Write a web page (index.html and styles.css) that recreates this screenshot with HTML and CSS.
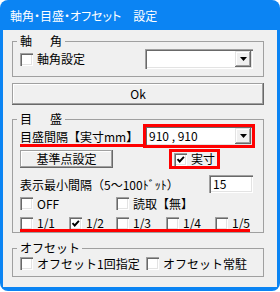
FILE: index.html
```html
<!DOCTYPE html>
<html>
<head>
<meta charset="utf-8">
<link rel="stylesheet" href="styles.css">
</head>
<body>
<div class="win">
  <div class="title">軸角・目盛・オフセット　設定</div>
  <div class="client">
    <fieldset class="grp g1">
      <legend>軸　角</legend>
      <div class="gb">
        <div class="row r-axis">
          <label class="chk"><span class="box"></span>軸角設定</label>
          <div class="combo c-axis"><span class="cval"></span><span class="dd"><svg width="7" height="4" viewBox="0 0 7 4"><path d="M0 0h7L3.5 4z" fill="#000"/></svg></span></div>
        </div>
      </div>
    </fieldset>
    <div class="btn ok">Ok</div>
    <fieldset class="grp g2">
      <legend>目　盛</legend>
      <div class="gb">
        <div class="row r-int">
          <span class="lbl under">目盛間隔【実寸mm】</span>
          <div class="combo c-int redbox"><span class="cval num">910 , 910</span><span class="dd"><svg width="7" height="4" viewBox="0 0 7 4"><path d="M0 0h7L3.5 4z" fill="#000"/></svg></span></div>
        </div>
        <div class="row r-base">
          <div class="btn base">基準点設定</div>
          <label class="chk jissun redbox"><span class="box"><svg width="9" height="9" viewBox="0 0 9 9"><path d="M1.5 4.2l2.2 2.3 4.2-4.6" fill="none" stroke="#000" stroke-width="1.9"/></svg></span>実寸</label>
        </div>
        <div class="row r-min">
          <span class="lbl">表示最小間隔（5～100ﾄﾞｯﾄ）</span>
          <div class="edit num">15</div>
        </div>
        <div class="row r-off">
          <label class="chk w-off"><span class="box"></span>OFF</label>
          <label class="chk"><span class="box"></span>読取【無】</label>
        </div>
        <div class="row r-frac underline2">
          <label class="chk f1"><span class="box"></span>1/1</label>
          <label class="chk f2"><span class="box"><svg width="9" height="9" viewBox="0 0 9 9"><path d="M1.5 4.2l2.2 2.3 4.2-4.6" fill="none" stroke="#000" stroke-width="1.9"/></svg></span>1/2</label>
          <label class="chk f3"><span class="box"></span>1/3</label>
          <label class="chk f4"><span class="box"></span>1/4</label>
          <label class="chk"><span class="box"></span>1/5</label>
        </div>
      </div>
    </fieldset>
    <fieldset class="grp g3">
      <legend class="leg-off">オフセット</legend>
      <div class="gb">
        <div class="row r-ofs">
          <label class="chk w-ofs"><span class="box"></span>オフセット1回指定</label>
          <label class="chk"><span class="box"></span>オフセット常駐</label>
        </div>
      </div>
    </fieldset>
  </div>
</div>
</body>
</html>
```

FILE: styles.css
```css
* { box-sizing: border-box; }
html, body { margin: 0; padding: 0; background: #fff; }
body {
  font-family: "Noto Sans CJK JP", "Noto Sans", sans-serif;
  font-size: 12px;
  color: #000;
}
.win {
  width: 280px;
  height: 291px;
  background: #0b84f3;
  border-radius: 8px;
  display: flex;
  flex-direction: column;
  padding: 0 3px 4px 3px;
}
.title {
  height: 30px;
  flex: none;
  color: #fff;
  padding-left: 7px;
  line-height: 31px;
  font-size: 12px;
  font-feature-settings: "palt";
}
.client {
  flex: 1;
  background: #f0f0f0;
  padding-left: 9px;
  padding-top: 4px;
}
.grp {
  width: 252px;
  margin: 0;
  padding: 0;
  border: 1px solid #a0a0a0;
  min-width: 0;
}
.grp legend {
  padding: 0 0 0 3px;
  margin-left: 4px;
  line-height: 14px;
  letter-spacing: 3px;
}
.grp legend.leg-off { letter-spacing: 0; padding-right: 2px; }
.gb { padding-left: 7px; }
.row { display: flex; align-items: center; }

.chk { display: flex; align-items: center; gap: 4px; line-height: 14px; }
.box {
  width: 13px; height: 13px; flex: none;
  background: #fff;
  box-shadow: inset 1px 1px #a0a0a0, inset 2px 2px #696969, inset -1px -1px #fff, inset -2px -2px #e3e3e3;
  display: flex; align-items: center; justify-content: center;
}

.combo {
  height: 20px;
  background: #fff;
  display: flex;
  padding: 2px;
  box-shadow: inset 1px 1px #a0a0a0, inset 2px 2px #696969, inset -1px -1px #fff, inset -2px -2px #e3e3e3;
}
.cval { flex: 1; padding-left: 2px; line-height: 16px; }
.dd {
  width: 16px; height: 16px; flex: none;
  background: #f0f0f0;
  box-shadow: inset -1px -1px #696969, inset 1px 1px #e3e3e3, inset -2px -2px #a0a0a0, inset 2px 2px #fff;
  display: flex; align-items: center; justify-content: center;
}
.btn {
  background: #f0f0f0;
  box-shadow: inset -1px -1px #696969, inset 1px 1px #a0a0a0, inset -2px -2px #a0a0a0, inset 2px 2px #fff;
  display: flex; align-items: center; justify-content: center;
  line-height: 14px;
}
.edit {
  width: 44px; height: 18px;
  background: #fff;
  padding-left: 4px;
  line-height: 18px;
  box-shadow: inset 1px 1px #a0a0a0, inset 2px 2px #696969, inset -1px -1px #fff, inset -2px -2px #e3e3e3;
}
.num { font-family: "Noto Sans CJK JP", "DejaVu Sans", sans-serif; }

.redbox { outline: 3px solid #f00; }

/* group 1 */
.g1 { padding-bottom: 7px; }
.r-axis { margin-top: 1px; height: 20px; padding-right: 10px; }
.c-axis { width: 108px; margin-left: auto; }

.ok { width: 252px; height: 22px; margin-top: 6px; }

/* group 2 */
.g2 { margin-top: 7px; padding-bottom: 2px; }
.r-int { height: 20px; padding-right: 10px; }
.lbl.under { position: relative; align-self: stretch; display: flex; align-items: center; width: 125px; }
.lbl.under::after { content: ""; position: absolute; left: 0; right: 0; bottom: -1px; height: 3px; background: #f00; }
.c-int { width: 108px; margin-left: auto; outline-offset: -1px; }
.r-base { margin-top: 4px; height: 18px; }
.base { width: 93px; height: 18px; }
.jissun { margin-left: 58px; padding: 0 3px; outline-offset: -1px; height: 16px; }
.r-min { margin-top: 7px; height: 18px; padding-right: 10px; justify-content: space-between; }
.r-off { margin-top: 4px; height: 13px; }
.w-off { width: 96px; }
.r-frac { margin-top: 7px; height: 13px; position: relative; align-items: flex-start; }
.r-frac .chk { align-items: flex-start; line-height: 12px; }
.f1 { width: 49px; }
.f2 { width: 47px; }
.f3 { width: 50px; }
.f4 { width: 49px; }
.underline2::after { content: ""; position: absolute; left: 0; width: 230px; bottom: -2px; height: 3px; background: #f00; }

/* group 3 */
.g3 { margin-top: 8px; padding-bottom: 6px; }
.r-ofs { margin-top: 2px; height: 13px; }
.w-ofs { width: 126px; }
```
